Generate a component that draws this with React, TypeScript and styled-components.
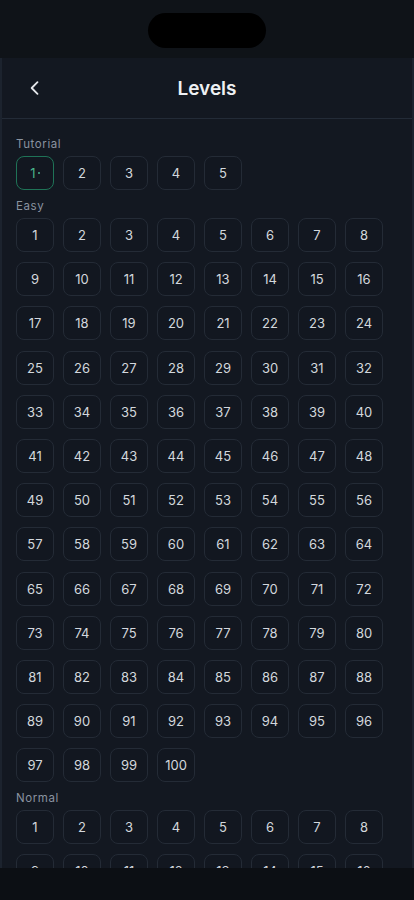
import styled, { createGlobalStyle } from 'styled-components';

const GlobalStyle = createGlobalStyle`
  html, body {
    margin: 0;
    padding: 0;
    background: #0f1318;
    font-family: Inter, "Noto Sans", "Liberation Sans", sans-serif;
  }
  * { box-sizing: border-box; }
`;

const Page = styled.div`
  width: 414px;
  height: 900px;
  display: flex;
  flex-direction: column;
  background: #0f1318;
  overflow: hidden;
`;

const StatusBar = styled.div`
  height: 58px;
  flex-shrink: 0;
  display: flex;
  justify-content: center;
  padding-top: 13px;
  background: #0f1318;
`;

const Island = styled.div`
  width: 118px;
  height: 35px;
  border-radius: 18px;
  background: #000;
`;

const Frame = styled.div`
  flex: 1;
  min-height: 0;
  display: flex;
  flex-direction: column;
  background: #131821;
  border-left: 2px solid #1c232e;
  border-right: 2px solid #1c232e;
  overflow: hidden;
`;

const Header = styled.header`
  height: 61px;
  flex-shrink: 0;
  display: grid;
  grid-template-columns: 60px 1fr 60px;
  align-items: center;
  border-bottom: 1px solid #232b37;
`;

const BackButton = styled.button`
  background: none;
  border: none;
  padding: 0 0 0 23px;
  display: flex;
  align-items: center;
  color: #e5e7eb;
  cursor: pointer;
`;

const Title = styled.h1`
  margin: 0;
  text-align: center;
  font-size: 19px;
  font-weight: 600;
  color: #eef0f3;
`;

const Content = styled.main`
  flex: 1;
  min-height: 0;
  overflow: hidden;
  padding: 16px 14px 0;
`;

const Section = styled.section`
  margin-bottom: 7px;
`;

const Label = styled.div`
  height: 17px;
  padding-top: 1px;
  line-height: 16px;
  font-size: 11.5px;
  color: #8a93a0;
  letter-spacing: 0.6px;
  margin-bottom: 4px;
`;

const Grid = styled.div`
  display: flex;
  flex-wrap: wrap;
  column-gap: 9px;
  row-gap: 10.2px;
  width: 370px;
`;

const LevelButton = styled.button<{ $active?: boolean }>`
  width: 38px;
  height: 34px;
  border-radius: 8px;
  background: #121720;
  border: 1px solid ${p => (p.$active ? '#1f7357' : '#242b36')};
  color: ${p => (p.$active ? '#49b58c' : '#d3d7dd')};
  font-family: inherit;
  font-size: 13px;
  display: flex;
  align-items: center;
  justify-content: center;
  gap: 2px;
  padding: 0;
  cursor: pointer;
`;

const Dot = styled.span`
  width: 2px;
  height: 2px;
  border-radius: 50%;
  background: #49b58c;
`;

const BottomBar = styled.div`
  height: 32px;
  flex-shrink: 0;
  background: #0c0f14;
`;

const range = (n: number) => Array.from({ length: n }, (_, i) => i + 1);

const sections = [
  { name: 'Tutorial', count: 5 },
  { name: 'Easy', count: 100 },
  { name: 'Normal', count: 100 },
];

function App() {
  return (
    <Page>
      <GlobalStyle />
      <StatusBar>
        <Island />
      </StatusBar>
      <Frame>
        <Header>
          <BackButton aria-label="Back">
            <svg width="20" height="20" viewBox="0 0 24 24" fill="none" stroke="currentColor" strokeWidth="2.2" strokeLinecap="round" strokeLinejoin="round">
              <path d="M15 5l-7 7 7 7" />
            </svg>
          </BackButton>
          <Title>Levels</Title>
          <div />
        </Header>
        <Content>
          {sections.map(s => (
            <Section key={s.name}>
              <Label>{s.name}</Label>
              <Grid>
                {range(s.count).map(n => {
                  const active = s.name === 'Tutorial' && n === 1;
                  return (
                    <LevelButton key={n} $active={active}>
                      {n}
                      {active && <Dot />}
                    </LevelButton>
                  );
                })}
              </Grid>
            </Section>
          ))}
        </Content>
      </Frame>
      <BottomBar />
    </Page>
  );
}

export default App;
